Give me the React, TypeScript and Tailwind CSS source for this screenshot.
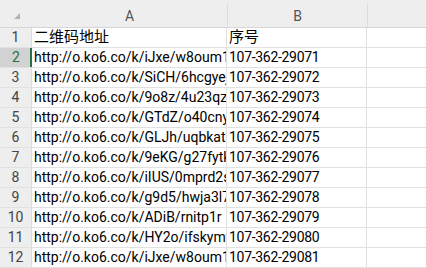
const rows = [
  { a: "http://o.ko6.co/k/iJxe/w8oum1", b: "107-362-29071" },
  { a: "http://o.ko6.co/k/SiCH/6hcgyej", b: "107-362-29072" },
  { a: "http://o.ko6.co/k/9o8z/4u23qzw", b: "107-362-29073" },
  { a: "http://o.ko6.co/k/GTdZ/o40cny", b: "107-362-29074" },
  { a: "http://o.ko6.co/k/GLJh/uqbkatr", b: "107-362-29075" },
  { a: "http://o.ko6.co/k/9eKG/g27fytk", b: "107-362-29076" },
  { a: "http://o.ko6.co/k/iIUS/0mprd2s", b: "107-362-29077" },
  { a: "http://o.ko6.co/k/g9d5/hwja3l7", b: "107-362-29078" },
  { a: "http://o.ko6.co/k/ADiB/rnitp1r", b: "107-362-29079" },
  { a: "http://o.ko6.co/k/HY2o/ifskymt", b: "107-362-29080" },
  { a: "http://o.ko6.co/k/iJxe/w8oum1", b: "107-362-29081" },
];

const font = { fontFamily: '"Roboto", "Noto Sans CJK SC", sans-serif' };

const App = () => {
  return (
    <div
      className="w-[426px] h-[268px] overflow-hidden bg-white text-[#000] text-[14px]"
      style={font}
    >
      {/* column headers */}
      <div className="flex h-[28px] bg-[#eeeeee] border-b border-[#d6d6d6]">
        <div className="w-[32px] shrink-0 flex items-end justify-end pr-[12px] pb-[8px]">
          <svg width="6" height="6" viewBox="0 0 6 6">
            <polygon points="6,0 6,6 0,6" fill="#b3b3b3" />
          </svg>
        </div>
        <div className="w-[195px] shrink-0 flex items-center justify-center text-[#555] pt-[6px]">
          A
        </div>
        <div className="w-[140px] shrink-0 flex items-center justify-center text-[#555] pt-[2px] border-l border-[#dcdcdc] mt-[4px]">
          B
        </div>
        <div className="flex-1 border-l border-[#dcdcdc] mt-[4px]" />
      </div>

      {/* row 1 */}
      <div className="flex h-[20px] border-b border-[#e1e1e1]">
        <div className="w-[32px] shrink-0 bg-[#eeeeee] border-r border-[#dcdcdc] flex items-center justify-center text-[#444]">
          1
        </div>
        <div className="w-[195px] shrink-0 pl-[2px] border-r border-[#e1e1e1] flex items-center text-[15px] overflow-hidden whitespace-nowrap">
          二维码地址
        </div>
        <div className="w-[140px] shrink-0 pl-[2px] border-r border-[#e1e1e1] flex items-center text-[15px]">
          序号
        </div>
        <div className="flex-1" />
      </div>

      {rows.map((r, i) => {
        const selected = i === 0;
        return (
          <div key={i} className="flex h-[20px] border-b border-[#e1e1e1]">
            <div
              className={
                selected
                  ? "w-[32px] shrink-0 bg-[#d2d2d2] border-r-2 border-[#217346] flex items-center justify-center text-[#217346] pl-[2px]"
                  : "w-[32px] shrink-0 bg-[#eeeeee] border-r border-[#dcdcdc] flex items-center justify-center text-[#444]"
              }
            >
              {i + 2}
            </div>
            <div className="w-[195px] shrink-0 pl-[2px] border-r border-[#e1e1e1] flex items-center overflow-hidden whitespace-nowrap">
              {r.a}
            </div>
            <div className="w-[140px] shrink-0 pl-[2px] border-r border-[#e1e1e1] flex items-center whitespace-nowrap tracking-[-0.3px]">
              {r.b}
            </div>
            <div className="flex-1" />
          </div>
        );
      })}
    </div>
  );
};

export default App;
